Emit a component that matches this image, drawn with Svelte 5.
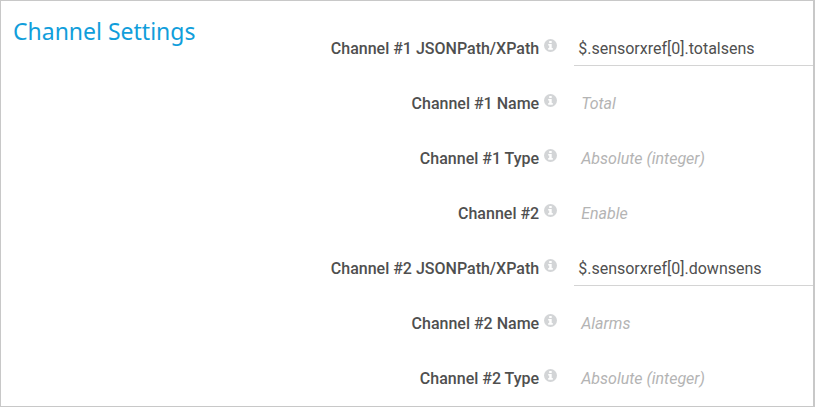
<script>
  const fields = [
    { id: 'path1', label: 'Channel #1 JSONPath/XPath', value: '$.sensorxref[0].totalsens', editable: true },
    { id: 'name1', label: 'Channel #1 Name', value: 'Total' },
    { id: 'type1', label: 'Channel #1 Type', value: 'Absolute (integer)' },
    { id: 'enable2', label: 'Channel #2', value: 'Enable' },
    { id: 'path2', label: 'Channel #2 JSONPath/XPath', value: '$.sensorxref[0].downsens', editable: true },
    { id: 'name2', label: 'Channel #2 Name', value: 'Alarms' },
    { id: 'type2', label: 'Channel #2 Type', value: 'Absolute (integer)' }
  ];
</script>

<section class="panel">
  <h2>Channel Settings</h2>
  <form>
    {#each fields as field}
      <div class="row">
        <div class="caption">
          <label for={field.id}>{field.label}</label>
          <svg class="info" viewBox="0 0 13 13" aria-hidden="true">
            <circle cx="6.5" cy="6.5" r="6.5" />
            <path d="M5.2 2h2.5v2.1H5.2zM4.2 5h3.5v4.1h1.1v1.6H4.2V9.1h1V6.6h-1z" />
          </svg>
        </div>
        {#if field.editable}
          <input id={field.id} type="text" bind:value={field.value} spellcheck="false" />
        {:else}
          <output id={field.id}>{field.value}</output>
        {/if}
      </div>
    {/each}
  </form>
</section>

<style>
  :global(body) {
    background: #fff;
  }
  .panel {
    display: grid;
    grid-template-columns: 5fr 12fr;
    box-sizing: border-box;
    min-height: 100vh;
    padding-top: 20px;
    border: 1px solid #c8c8c8;
    border-right-width: 2px;
    border-bottom-width: 2px;
    font-family: Roboto, "Liberation Sans", sans-serif;
    font-size: 16px;
    color: #4f4f4f;
  }
  h2 {
    margin: 0;
    padding-left: 12px;
    font-family: "Noto Sans", sans-serif;
    font-size: 23px;
    font-weight: 400;
    line-height: 20px;
    color: #119edb;
    white-space: nowrap;
  }
  form {
    min-width: 0;
  }
  .row {
    display: grid;
    grid-template-columns: 7fr 5fr;
    align-items: center;
    height: 55px;
  }
  .caption {
    display: flex;
    justify-content: flex-end;
    align-items: center;
    gap: 5px;
    padding-right: 17px;
    font-weight: 500;
    white-space: nowrap;
  }
  .info {
    width: 13px;
    height: 13px;
    margin-bottom: 6px;
  }
  .info circle {
    fill: #d3d5d7;
  }
  .info path {
    fill: #fff;
  }
  input {
    box-sizing: border-box;
    width: 100%;
    min-width: 0;
    height: 34px;
    padding: 1px 4px 0;
    border: 0;
    border-bottom: 1px solid #d4d4d4;
    border-radius: 0;
    outline: 0;
    background: transparent;
    font: inherit;
    color: inherit;
  }
  output {
    padding-left: 7px;
    font-style: italic;
    color: #b4b4b4;
  }
</style>
